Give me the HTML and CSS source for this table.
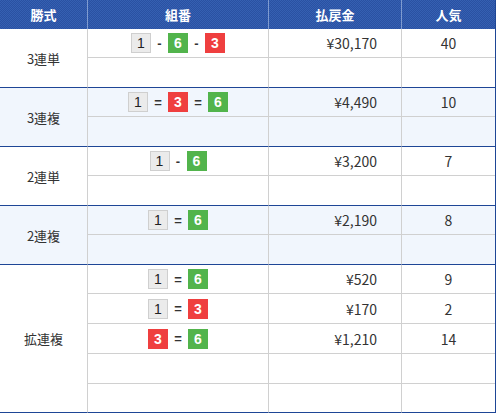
FILE: index.html
```html
<!DOCTYPE html>
<html lang="ja">
<head>
<meta charset="utf-8">
<link rel="stylesheet" href="styles.css">
</head>
<body>
<div class="table">
  <div class="head">
    <div class="th">勝式</div>
    <div class="th">組番</div>
    <div class="th">払戻金</div>
    <div class="th">人気</div>
  </div>

  <div class="group g2">
    <div class="type">3連単</div>
    <div class="cell combo"><span class="b b1">1</span><span class="sep">-</span><span class="b b6">6</span><span class="sep">-</span><span class="b b3">3</span></div>
    <div class="cell pay">¥30,170</div>
    <div class="cell pop">40</div>
    <div class="cell last"></div><div class="cell last"></div><div class="cell last end"></div>
  </div>

  <div class="group g2 alt">
    <div class="type">3連複</div>
    <div class="cell combo"><span class="b b1">1</span><span class="sep eq">=</span><span class="b b3">3</span><span class="sep eq">=</span><span class="b b6">6</span></div>
    <div class="cell pay">¥4,490</div>
    <div class="cell pop">10</div>
    <div class="cell last"></div><div class="cell last"></div><div class="cell last end"></div>
  </div>

  <div class="group g2">
    <div class="type">2連単</div>
    <div class="cell combo"><span class="b b1">1</span><span class="sep">-</span><span class="b b6">6</span></div>
    <div class="cell pay">¥3,200</div>
    <div class="cell pop">7</div>
    <div class="cell last"></div><div class="cell last"></div><div class="cell last end"></div>
  </div>

  <div class="group g2 alt">
    <div class="type">2連複</div>
    <div class="cell combo"><span class="b b1">1</span><span class="sep eq">=</span><span class="b b6">6</span></div>
    <div class="cell pay">¥2,190</div>
    <div class="cell pop">8</div>
    <div class="cell last"></div><div class="cell last"></div><div class="cell last end"></div>
  </div>

  <div class="group g5">
    <div class="type">拡連複</div>
    <div class="cell combo"><span class="b b1">1</span><span class="sep eq">=</span><span class="b b6">6</span></div>
    <div class="cell pay">¥520</div>
    <div class="cell pop">9</div>
    <div class="cell combo"><span class="b b1">1</span><span class="sep eq">=</span><span class="b b3">3</span></div>
    <div class="cell pay">¥170</div>
    <div class="cell pop">2</div>
    <div class="cell combo"><span class="b b3">3</span><span class="sep eq">=</span><span class="b b6">6</span></div>
    <div class="cell pay">¥1,210</div>
    <div class="cell pop">14</div>
    <div class="cell"></div><div class="cell"></div><div class="cell"></div>
    <div class="cell last"></div><div class="cell last"></div><div class="cell last end"></div>
  </div>
</div>
</body>
</html>
```

FILE: styles.css
```css
* { box-sizing: border-box; }
html, body { margin: 0; padding: 0; background: #fff; }
body {
  font-family: "Noto Sans CJK JP", "Noto Sans", sans-serif;
  color: #333;
  font-size: 13px;
}
.table {
  width: 496px;
  border-right: 1px solid #1e4696;
}
.head {
  display: grid;
  grid-template-columns: 88px 181px 133px 93px;
  height: 29px;
  background: repeating-conic-gradient(#2a51a2 0 25%, #3560b2 0 50%) 0 0 / 2px 2px;
}
.th {
  display: flex;
  align-items: center;
  justify-content: center;
  color: #fff;
  font-weight: bold;
  font-size: 13px;
  border-right: 1px solid #7f9bd0;
}
.th:last-child { border-right: none; }
.group {
  display: grid;
  grid-template-columns: 88px 181px 133px 93px;
}
.g2 { grid-template-rows: 29px 30px; }
.g5 { grid-template-rows: 29px 30px 30px 30px 29px; }
.alt { background: #f1f6fd; }
.type {
  grid-row: 1 / -1;
  display: flex;
  align-items: center;
  justify-content: center;
  border-right: 1px solid #d0d0d0;
  border-bottom: 1px solid #1e4696;
  font-size: 13px;
}
.cell {
  border-right: 1px solid #d0d0d0;
  border-bottom: 1px solid #d0d0d0;
  display: flex;
  align-items: center;
}
.cell.last { border-bottom-color: #1e4696; }
.cell.end, .pop { border-right: none; }
.group > .cell:nth-child(3n+1) { border-right: none; }
.combo { justify-content: center; gap: 0; }
.pay { justify-content: flex-end; padding-right: 24px; font-size: 14px; }
.pop { justify-content: center; font-size: 14px; }
.b {
  width: 20px;
  height: 20px;
  display: inline-flex;
  align-items: center;
  justify-content: center;
  font-family: "Liberation Sans", Arial, sans-serif;
  font-size: 14px;
  font-weight: bold;
  color: #fff;
}
.b1 {
  background: #ebebeb;
  border: 1px solid #cfcfcf;
  color: #222;
  font-weight: normal;
}
.b6 { background: #52b44c; }
.b3 { background: #ef3f3f; }
.sep {
  width: 17px;
  text-align: center;
  font-family: "Liberation Sans", Arial, sans-serif;
  font-weight: bold;
  font-size: 13px;
  color: #333;
}
.sep.eq { width: 20px; }
```
